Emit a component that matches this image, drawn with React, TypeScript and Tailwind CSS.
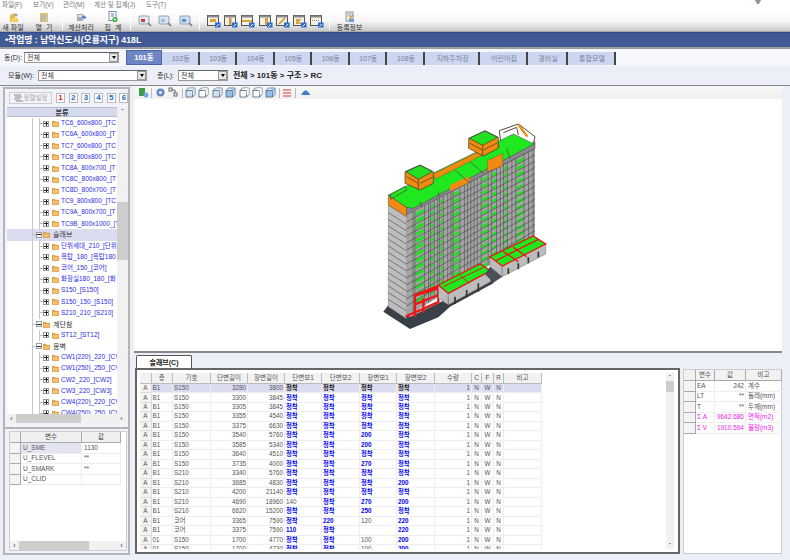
import React from "react";

const Sep = () => <div className="w-px h-[16px] bg-[#b5b5b5] border-r border-white shrink-0" />;

const Slot = ({ w, icon, label }: { w: string; icon: React.ReactNode; label?: string }) => (
  <div className={`${w} shrink-0 flex flex-col items-center`}>
    <div className="h-[11px] flex items-center justify-center">{icon}</div>
    {label && <div className="text-[7px] leading-[9px] text-[#333] whitespace-pre">{label}</div>}
  </div>
);

const FolderIcon = () => (
  <svg width="11" height="11" viewBox="0 0 11 11"><path d="M2 3 L7 1 V7 L2 10Z" fill="#e8b93c" /><path d="M4 6h6v4H2z" fill="#f2cf62" /><circle cx="8" cy="3" r="1.6" fill="#8aa9d8" /></svg>
);
const OpenIcon = () => (
  <svg width="11" height="11" viewBox="0 0 11 11"><rect x="2" y="1" width="7" height="9" fill="#e9c468" /><rect x="4" y="2" width="3" height="7" fill="#9fc0e0" /><path d="M2 1v9" stroke="#b98a2c" /></svg>
);
const CalcIcon = () => (
  <svg width="12" height="11" viewBox="0 0 12 11"><rect x="2" y="2" width="6" height="7" fill="#a9a9b0" /><rect x="3" y="3" width="4" height="2" fill="#dfe3ea" /><path d="M7 5h3M8.500 3.500 10.500 5.500 8.500 7" stroke="#3f84cc" strokeWidth="1.3" fill="none" /></svg>
);
const SumIcon = () => (
  <svg width="12" height="12" viewBox="0 0 12 12"><rect x="2" y="0.500" width="7" height="9" fill="#fff" stroke="#7c8fa8" /><path d="M4 3h3M4 5h3" stroke="#4a7cbd" /><circle cx="8" cy="8.500" r="2.600" fill="#3fae4a" /><path d="M6.800 8.500h2.400M8 7.300v2.400" stroke="#fff" strokeWidth=".7" /></svg>
);
const MagIcon = ({ fill, accent }: { fill: string; accent: string }) => (
  <svg width="15" height="13" viewBox="0 0 15 13">
    <rect x="1" y="1" width="10" height="8" rx="1" fill={fill} stroke="#8aa0b8" />
    <rect x="3" y="4" width="4" height="3" fill={accent} />
    <path d="M10 8l3 3" stroke="#777" strokeWidth="1.600" />
  </svg>
);
const LayoutIcon = ({ v }: { v: number }) => (
  <svg width="14" height="13" viewBox="0 0 14 13">
    <rect x="0.500" y="0.500" width="11" height="10" fill="#f3f1e6" stroke="#555" />
    <rect x="0.500" y="0.500" width="11" height="2" fill="#8b8b8b" />
    {v === 0 && <rect x="3" y="4" width="6" height="3" fill="#d9a43a" />}
    {v === 1 && <rect x="5" y="3" width="2.500" height="7" fill="#c69a3a" />}
    {v === 2 && <rect x="1" y="5" width="10" height="2" fill="#d9a43a" />}
    {v === 3 && <rect x="6" y="3" width="3" height="7" fill="#d9a43a" />}
    {v === 4 && <path d="M3 9 9 3" stroke="#c8952e" strokeWidth="1.600" />}
    {v === 5 && <path d="M3 4h6L6 6.500 9 9H3" fill="#d9a43a" />}
    {v === 6 && <path d="M2 5.500h8" stroke="#8b8b8b" strokeDasharray="1 1" />}
    <rect x="8" y="7.500" width="5.500" height="5" fill="#2f6ccf" />
    <path d="M9.500 11.500l2.500-2.500" stroke="#fff" />
  </svg>
);
const RegIcon = () => (
  <svg width="12" height="12" viewBox="0 0 12 12"><rect x="2" y="1" width="7" height="9" fill="#f4f1e2" stroke="#8c95a8" /><path d="M3.500 3h4M3.500 5h4" stroke="#99a" /><path d="M5 9 9 4" stroke="#d79a2d" strokeWidth="1.500" /><rect x="5" y="8" width="5" height="3" fill="#6ba0da" /></svg>
);
const Cube = ({ c }: { c: string }) => (
  <svg width="11" height="11" viewBox="0 0 11 11">
    <path d="M1 3.500h6.500v6.500H1z" fill={c} stroke="#4c5f7c" strokeWidth=".8" />
    <path d="M1 3.500 3.500 1H10L7.500 3.500M10 1v6.500L7.500 10" fill="none" stroke="#4c5f7c" strokeWidth=".8" />
    <path d="M3.500 1H10v6.500H7.500V3.500z" fill={c} opacity=".7" />
  </svg>
);

const Select = ({ w, v }: { w: string; v: string }) => (
  <div className={`${w} h-[11px] bg-white border border-[#999] border-t-[#666] flex items-center justify-between shrink-0`}>
    <span className="pl-[2px] text-[7px] leading-none text-[#333]">{v}</span>
    <div className="w-[9px] h-[9px] bg-[#e6e6e6] border border-[#999] flex items-center justify-center">
      <div className="w-0 h-0 border-l-[2.500px] border-r-[2.500px] border-t-[3px] border-l-transparent border-r-transparent border-t-black" />
    </div>
  </div>
);

const tabs: [string, string][] = [
  ["102동", "w-[37.500px]"], ["103동", "w-[37.500px]"], ["104동", "w-[37.500px]"], ["105동", "w-[37.500px]"],
  ["106동", "w-[37.500px]"], ["107동", "w-[37.500px]"], ["108동", "w-[38px]"], ["지하주차장", "w-[55px]"],
  ["어린이집", "w-[48px]"], ["경비실", "w-[40px]"], ["통합모델", "w-[48px]"],
];

const Fold = ({ x }: { x: string }) => (
  <svg width="7" height="7" viewBox="0 0 8 8" className={`${x} shrink-0`}>
    <path d="M0.500 1.500h2.500l1 1h3.500v5h-7z" fill="#f0a040" stroke="#c47a22" strokeWidth=".6" />
    <rect x="1.200" y="3.400" width="5.800" height="3.600" fill="#f9c06c" />
  </svg>
);
const Box = ({ open }: { open?: boolean }) => (
  <div className="relative w-[6px] h-[6px] border border-[#999] bg-white shrink-0 flex items-center justify-center">
    <div className="w-[4px] h-px bg-[#222]" />
    {!open && <div className="absolute w-px h-[4px] bg-[#222]" />}
  </div>
);

type Node = { t: string; g?: boolean; sel?: boolean };
const tree: Node[] = [
  ...["TC6_600x800_[TC", "TC6A_600x800_[T", "TC7_600x800_[TC", "TC8_800x800_[TC", "TC8A_800x700_[T", "TC8C_800x800_[T", "TC8D_800x700_[T", "TC9_800x800_[TC", "TC9A_800x700_[T", "TC9B_800x1000_[T"].map((t) => ({ t })),
  { t: "슬래브", g: true, sel: true },
  ...["단위세대_210_[단위", "옥탑_180_[옥탑180", "코어_150_[코어]", "화장실180_180_[화", "S150_[S150]", "S150_150_[S150]", "S210_210_[S210]"].map((t) => ({ t })),
  { t: "계단참", g: true },
  { t: "ST12_[ST12]" },
  { t: "옹벽", g: true },
  ...["CW1(220)_220_[CV", "CW1(250)_250_[CV", "CW2_220_[CW2]", "CW3_220_[CW3]", "CW4(220)_220_[CV", "CW4(250)_250_[CV"].map((t) => ({ t })),
];

const ScrollH = ({ cls, thumb }: { cls: string; thumb: string }) => (
  <div className={`${cls} h-[9px] bg-[#f1f1f1] flex items-center shrink-0`}>
    <span className="w-[9px] text-center text-[7px] leading-none text-[#333]">‹</span>
    <div className={`${thumb} h-[9px] bg-[#cdcdcd]`} />
    <div className="flex-1" />
    <span className="w-[9px] text-center text-[7px] leading-none text-[#333]">›</span>
  </div>
);

const J = "정착";
const rows: string[][] = [
  ["B1", "S150", "3280", "3800", J, J, J, J],
  ["B1", "S150", "3300", "3845", J, J, J, J],
  ["B1", "S150", "3305", "3845", J, J, J, J],
  ["B1", "S150", "3355", "4540", J, J, J, J],
  ["B1", "S150", "3375", "6630", J, J, J, J],
  ["B1", "S150", "3540", "5760", J, J, "200", J],
  ["B1", "S150", "3585", "5340", J, J, "200", J],
  ["B1", "S150", "3640", "4510", J, J, J, J],
  ["B1", "S150", "3735", "4000", J, J, "270", J],
  ["B1", "S210", "3340", "5760", J, J, J, J],
  ["B1", "S210", "3685", "4830", J, J, J, "200"],
  ["B1", "S210", "4200", "21140", J, J, J, J],
  ["B1", "S210", "4690", "18960", "140", J, "270", "200"],
  ["B1", "S210", "6620", "15200", J, J, "250", J],
  ["B1", "코어", "3365", "7590", J, "220", "120", "220"],
  ["B1", "코어", "3375", "7590", "110", J, "", "220"],
  ["01", "S150", "1700", "4770", J, J, "100", "200"],
  ["01", "S150", "1700", "4730", J, J, "100", "200"],
];
const thin = new Set(["140", "120", "100"]);
const heads = ["", "층", "기호", "단변길이", "장변길이", "단변보1", "단변보2", "장변보1", "장변보2", "수량", "C", "F", "R", "비고"];
const tableGrid = "grid grid-cols-[11.500px_21.500px_38px_37px_37px_37px_38px_37px_38px_37px_10px_12px_10px_38px]";

const Building = () => {
  const P = (u: number, v: number) => `${110 + 385 * u},${285 - 200 * u + v}`;
  const poly = (pts: string[]) => pts.join(" ");
  const floors = Array.from({ length: 14 }, (_, i) => i);
  const greens: [number, number][] = [[0.07, 0.135], [0.19, 0.21], [0.26, 0.28], [0.36, 0.41], [0.585, 0.63], [0.665, 0.695], [0.76, 0.78], [0.855, 0.91]];
  const columns = [0.05, 0.065, 0.14, 0.17, 0.185, 0.215, 0.24, 0.255, 0.285, 0.32, 0.345, 0.36, 0.415, 0.45, 0.475, 0.5, 0.525, 0.55, 0.58, 0.635, 0.66, 0.7, 0.73, 0.755, 0.785, 0.82, 0.85, 0.915, 0.95, 0.985];
  return (
    <svg width="200" height="210" viewBox="0 0 600 630" className="block">
      <polygon points="40,575 120,627 205,592 240,560 370,490 380,465 340,480 205,550 120,590 55,555" fill="#3a4048" />
      <polygon points="55,255 110,290 110,597 55,560" fill="#bdbdbd" stroke="#444" />
      {floors.map((i) => (
        <line key={i} x1="55" y1={278 + i * 20} x2="110" y2={313 + i * 20} stroke="#444" strokeWidth="1.800" />
      ))}
      <polygon points={poly([P(0, 0), P(1, 0), P(1, 265), P(0, 305)])} fill="#a4a4a4" />
      {floors.map((i) => (
        <g key={i}>
          {greens.map(([a, b], k) => (
            <polygon key={k} points={poly([P(a, 8 + i * 20), P(b, 8 + i * 20), P(b, 18 + i * 20), P(a, 18 + i * 20)])} fill="#22e022" />
          ))}
          <polygon points={`110,${283 + i * 21} 495,${84 + i * 19} 495,${87 + i * 19} 110,${286 + i * 21}`} fill="#5e5e5e" opacity=".85" />
        </g>
      ))}
      {columns.map((u) => (
        <line key={u} x1={110 + 385 * u} y1={285 - 200 * u} x2={110 + 385 * u} y2={590 - 240 * u} stroke="#4a4a4a" strokeWidth="1.800" />
      ))}
      {/* upper frame behind roof */}
      <path d="M388 32 445 12 495 50 490 72 M388 32 392 65 M400 38 440 22 445 45" fill="none" stroke="#5a4a3a" strokeWidth="3" />
      <path d="M445 14 472 50" stroke="#f08a10" strokeWidth="7" />
      {/* parapet and roof */}
      <polygon points="55,225 110,262 110,290 55,255" fill="#f08a10" stroke="#444" strokeWidth="1.500" />
      <polygon points="110,262 495,65 495,85 110,282" fill="#8a8a8a" stroke="#444" strokeWidth="1.500" />
      <polygon points="55,225 430,42 492,72 130,265 110,262" fill="#1fe81f" stroke="#3a3a3a" strokeWidth="1.500" />
      <polygon points="190,162 380,68 390,78 196,178" fill="#f08a10" stroke="#444" />
      <polygon points="240,195 298,168 298,187 240,214" fill="#f08a10" />
      <polygon points="352,122 398,100 398,138 352,155" fill="#f08a10" stroke="#444" />
      <path d="M60 225 62 238 110 210 106 198ZM205 215 208 232M150 245 155 262M255 150 300 190M300 125 340 160M410 85 420 115" fill="none" stroke="#444" strokeWidth="2" />
      {/* penthouses */}
      <polygon points="105,155 150,135 190,155 190,190 150,210 105,190" fill="#f08a10" stroke="#333" strokeWidth="2" />
      <polygon points="108,155 150,136 187,155 145,178" fill="#22e022" stroke="#333" strokeWidth="2" />
      <path d="M145 178V208M110 170 145 190M150 190 188 172" stroke="#333" strokeWidth="2" fill="none" />
      <polygon points="296,55 345,32 385,52 385,85 340,108 296,85" fill="#f08a10" stroke="#333" strokeWidth="2" />
      <polygon points="298,55 345,33 382,52 338,76" fill="#22e022" stroke="#333" strokeWidth="2" />
      <path d="M338 76V106M300 70 338 90M340 90 383 68" stroke="#333" strokeWidth="2" fill="none" />
      {/* lower left red frames */}
      <path d="M135 590V525L205 498V548M160 578V535M107 590 208 545M135 527 205 505M135 553 205 525" fill="none" stroke="#e81818" strokeWidth="7" />
      {/* podium 1 */}
      <polygon points="205,495 235,520 235,555 205,535" fill="#bcbcbc" stroke="#444" />
      <polygon points="235,520 362,452 362,485 235,555" fill="#bcbcbc" stroke="#444" />
      <polygon points="205,495 330,432 362,452 235,520" fill="#1fe81f" stroke="#e81818" strokeWidth="4" />
      <path d="M220 500 345 440M272 468 298 490" stroke="#e81818" strokeWidth="3" fill="none" />
      <path d="M255 530V552M290 510V532M325 490V515" stroke="#333" strokeWidth="5" />
      {/* podium 2 */}
      <polygon points="360,410 397,438 397,470 360,440" fill="#bcbcbc" stroke="#444" />
      <polygon points="397,438 527,372 527,402 397,470" fill="#bcbcbc" stroke="#444" />
      <polygon points="360,410 490,348 527,372 397,438" fill="#1fe81f" stroke="#e81818" strokeWidth="4" />
      <path d="M378 422 505 358M400 395 445 425M430 382 470 410" stroke="#e81818" strokeWidth="4" fill="none" />
      <path d="M415 445V462M445 430V448M475 412V430M505 395V412" stroke="#333" strokeWidth="5" />
      <polygon points="360,440 397,470 370,488 345,462" fill="#4a4f58" />
    </svg>
  );
};

export default function App() {
  return (
    <div className="w-[790px] h-[560px] overflow-hidden bg-[#eceef8] flex flex-col font-['Liberation_Sans','Noto_Sans_CJK_KR',sans-serif] text-[#444]">
      {/* menu */}
      <div className="h-[12px] bg-white flex items-center justify-between pl-[2px] pr-[29px] shrink-0">
        <div className="flex text-[6.500px] leading-none text-[#777] -mt-[1px]">
          <span className="w-[31px]">파일(F)</span>
          <span className="w-[30px]">보기(V)</span>
          <span className="w-[31px]">관리(M)</span>
          <span className="w-[52px]">계산 및 집계(J)</span>
          <span>도구(T)</span>
        </div>
        <svg width="6" height="5" viewBox="0 0 6 5" className="self-start"><path d="M0 0h6L4 4H2z" fill="#8c97a8" /></svg>
      </div>
      {/* toolbar */}
      <div className="h-[20px] shrink-0 bg-gradient-to-b from-white via-[#f5f5f5] to-[#c9c9c9] flex items-center border-b border-[#aaa]">
        <Slot w="w-[26px]" icon={<FolderIcon />} label="새 파일" />
        <Slot w="w-[36px]" icon={<OpenIcon />} label="열  기" />
        <Sep />
        <Slot w="w-[36px]" icon={<CalcIcon />} label="계산처리" />
        <Slot w="w-[28px]" icon={<SumIcon />} label="집  계" />
        <div className="w-[3px]" />
        <Sep />
        <div className="w-[5px]" />
        <div className="w-[19px] flex justify-center"><MagIcon fill="#e6e9ee" accent="#c9403c" /></div>
        <div className="w-[20px] flex justify-center"><MagIcon fill="#dbe6f2" accent="#9bb9d8" /></div>
        <div className="w-[22px] flex justify-center"><MagIcon fill="#cfe0f5" accent="#5f8fcf" /></div>
        <div className="w-[2px]" />
        <Sep />
        <div className="w-[5px]" />
        {[0, 1, 2, 3, 4, 5, 6].map((v) => (
          <div key={v} className="w-[17.300px] flex justify-center"><LayoutIcon v={v} /></div>
        ))}
        <div className="w-[3px]" />
        <Sep />
        <Slot w="w-[39px]" icon={<RegIcon />} label="등록정보" />
      </div>
      {/* blue title */}
      <div className="h-[17px] shrink-0 bg-[#415a96] border-t border-[#2f4a88] border-b-2 border-b-[#9a9a9a] flex items-center pl-[5px]">
        <span className="text-[8.800px] leading-none font-bold text-white">•작업명 : 남악신도시(오룡지구) 418L</span>
      </div>
      {/* dong tabs */}
      <div className="h-[17px] shrink-0 bg-[#f6f7fc] flex items-center">
        <span className="w-[24px] pl-[4px] text-[7px] leading-none text-[#333] whitespace-nowrap">동(D):</span>
        <Select w="w-[95px]" v="전체" />
        <div className="w-[7px]" />
        <div className="w-[36px] h-[15px] bg-[#6f86c6] border border-[#4a64a8] text-white font-bold text-[7.500px] leading-none flex items-center justify-center shrink-0">101동</div>
        {tabs.map(([t, w]) => (
          <div key={t} className={`${w} h-[13px] mt-[2px] bg-[#ccd6f0] border-r-2 border-r-[#444] pl-[2px] text-[7px] leading-none text-[#7a7f90] flex items-center justify-center shrink-0`}>{t}</div>
        ))}
      </div>
      {/* module row */}
      <div className="h-[20px] shrink-0 flex items-center border-b border-[#888]">
        <span className="w-[38px] pl-[8px] text-[7px] leading-none text-[#333] whitespace-nowrap">모듈(W):</span>
        <Select w="w-[109px]" v="전체" />
        <span className="ml-[10px] w-[21px] text-[7px] leading-none text-[#333] whitespace-nowrap">층(L):</span>
        <Select w="w-[50px]" v="전체" />
        <span className="ml-[5px] text-[8px] leading-none font-bold text-[#222]">전체 &gt; 101동 &gt; 구조 &gt; RC</span>
      </div>
      {/* body */}
      <div className="flex-1 flex min-h-0">
        {/* left panel */}
        <div className="w-[134px] shrink-0 pl-[3px] pr-[4px] pt-[1px] pb-[5px] flex flex-col">
          <div className="flex-1 flex flex-col min-h-0 border-2 border-[#b5b5b5] bg-[#f2f3fa]">
            <div className="h-[18px] shrink-0 flex items-center pl-[4px] overflow-hidden">
              <div className="w-[43px] h-[12px] border border-[#ccc] flex items-center justify-center gap-[1px] shrink-0">
                <svg width="9" height="8" viewBox="0 0 9 8"><path d="M0 1h7M1 3h7M0 5h6M2 7h7" stroke="#888" strokeWidth="1.200" /></svg>
                <span className="text-[6.500px] leading-none text-[#aaa]">정렬설정</span>
              </div>
              <div className="flex gap-[3.700px] ml-[4px] shrink-0">
                {["1", "2", "3", "4", "5", "6"].map((n, i) => (
                  <div key={n} className={`w-[9px] h-[10px] bg-white border border-[#bbb] text-[8px] leading-none font-bold flex items-center justify-center shrink-0 ${i === 0 ? "text-[#e01818]" : "text-[#1c6cc8]"}`}>{n}</div>
                ))}
              </div>
            </div>
            <div className="h-[307px] shrink-0 flex ml-[2px]">
              <div className="flex-1 min-w-0 flex flex-col">
                <div className="h-[10px] shrink-0 bg-[#d5d9ee] border-y border-[#b8bcd2] text-[7px] leading-none font-bold text-[#333] flex items-center justify-center">분류</div>
                <div className="flex-1 bg-white overflow-hidden pt-[1px]">
                  {tree.map((n) => (
                    <div key={n.t} className={`h-[11.150px] flex items-center whitespace-nowrap overflow-hidden ${n.sel ? "bg-[#dcdcf0]" : ""}`}>
                      <div className="w-[26px] self-stretch border-r border-[#c8c8c8] shrink-0" />
                      {!n.g && <div className="w-[7px] self-stretch border-r border-[#c8c8c8] shrink-0" />}
                      <div className="h-px bg-[#bbb] shrink-0 w-[3px]" />
                      <Box open={n.g} />
                      <Fold x={n.g ? "ml-[1px]" : "ml-[3px]"} />
                      {n.g ? (
                        <span className="ml-[3px] text-[7px] leading-none text-[#333]">{n.t}</span>
                      ) : (
                        <span className="ml-[2px] text-[6.500px] leading-none text-[#2c2ce6]">{n.t}</span>
                      )}
                    </div>
                  ))}
                </div>
              </div>
              <div className="w-[11px] shrink-0 bg-[#f1f1f1] flex flex-col items-center">
                <span className="h-[9px] text-[7px] leading-[9px] text-[#333]">ˆ</span>
                <div className="h-[86px] shrink-0" />
                <div className="w-full h-[58px] bg-[#cdcdcd] shrink-0" />
                <div className="flex-1" />
              </div>
            </div>
            <ScrollH cls="ml-[2px] mr-[2px]" thumb="w-[65px]" />
            <div className="h-[6px] shrink-0 border-b-2 border-[#b5b5b5]" />
            <div className="flex-1 min-h-0 m-[2px] ml-[4px] mr-[1px] bg-white border border-[#ccc] flex flex-col overflow-hidden">
              <div className="grid grid-cols-[11px_61px_39px] h-[11px] shrink-0 text-[6.500px] leading-none text-[#444]">
                {["", "변수", "값"].map((h, i) => (
                  <div key={i} className="bg-[#f0f0f0] border-r border-b border-[#aaa] flex items-center justify-center">{h}</div>
                ))}
              </div>
              {[["U_SME", "1130"], ["U_FLEVEL", "**"], ["U_SMARK", "**"], ["U_CLID", ""]].map(([a, b], i) => (
                <div key={a} className="grid grid-cols-[11px_61px_39px] h-[10.500px] shrink-0 text-[6.500px] leading-none text-[#555]">
                  <div className="bg-[#f4f4f4] border-r border-b border-[#aaa]" />
                  <div className={`pl-[2px] flex items-center border-r border-b border-[#eee] ${i === 0 ? "bg-[#e4e4f0]" : ""}`}>{a}</div>
                  <div className="pl-[2px] flex items-center border-r border-b border-[#eee]">{b}</div>
                </div>
              ))}
              <div className="flex-1" />
              <ScrollH cls="" thumb="w-[70px]" />
            </div>
          </div>
        </div>
        {/* right */}
        <div className="flex-1 min-w-0 flex flex-col pr-[8px]">
          <div className="h-[267px] shrink-0 bg-white border-b-2 border-[#888] flex flex-col overflow-hidden">
            <div className="h-[13px] shrink-0 bg-gradient-to-b from-[#f8f8f8] to-[#f0f0f0] flex items-center gap-[2.400px] pl-[4px]">
              <svg width="11" height="11" viewBox="0 0 11 11"><rect x="1" y="1" width="6" height="8" fill="#3f9a4a" /><circle cx="8" cy="8" r="2.500" fill="#74a7e0" /></svg>
              <div className="w-px h-[10px] bg-[#bbb]" />
              <svg width="11" height="11" viewBox="0 0 11 11"><circle cx="5.500" cy="5.500" r="4" fill="#6088c0" /><circle cx="5.500" cy="5.500" r="1.700" fill="#dde" /></svg>
              <svg width="11" height="11" viewBox="0 0 11 11"><rect x="1" y="1" width="3" height="3" fill="none" stroke="#667" /><rect x="6" y="6" width="3" height="3" fill="none" stroke="#667" /><path d="M4 3h3v3" fill="none" stroke="#667" /></svg>
              <div className="w-px h-[10px] bg-[#bbb]" />
              {["#cfe3f5", "#ffffff", "#cfe3f5", "#8fc0ea", "#ffffff", "#ffffff", "#8fc0ea"].map((c, i) => (
                <Cube key={i} c={c} />
              ))}
              <div className="w-px h-[10px] bg-[#bbb]" />
              <svg width="10" height="10" viewBox="0 0 10 10"><path d="M1 2h8M1 5h8M1 8h8" stroke="#d83a3a" /></svg>
              <div className="w-px h-[10px] bg-[#bbb] mx-[1px]" />
              <svg width="11" height="9" viewBox="0 0 11 9"><path d="M1 7 3 4 6 2l4 4v1z" fill="#3f7fc8" /></svg>
            </div>
            <div className="pl-[236px] pt-[21px]"><Building /></div>
          </div>
          <div className="h-[2px] shrink-0" />
          <div className="flex flex-1 min-h-0 pb-[6px]">
            <div className="w-[546px] shrink-0 flex flex-col">
              <div className="h-[13px] shrink-0 flex items-end">
                <div className="ml-[2px] w-[56px] h-[13px] bg-white border border-b-0 border-[#555] rounded-t-[2px] text-[7px] leading-none font-bold text-[#222] flex items-center justify-center">슬래브(C)</div>
              </div>
              <div className="flex-1 min-h-0 ml-[1px] bg-white border-2 border-[#666] flex p-[3px]">
                <div className="w-[402px] shrink-0 overflow-hidden">
                  <div className={`${tableGrid} h-[11px] text-[6.500px] leading-none text-[#555]`}>
                    {heads.map((h, i) => (
                      <div key={i} className="bg-[#f2f2f2] border-r border-b border-[#bbb] flex items-center justify-center">{h}</div>
                    ))}
                  </div>
                  {rows.map((r, i) => (
                    <div key={i} className={`${tableGrid} h-[9.470px] text-[6.300px] leading-none text-[#555]`}>
                      <div className="bg-[#f4f4f4] border-r border-b border-[#ddd] flex items-center justify-center">A</div>
                      {[...r, "1", "N", "W", "N", ""].map((c, k) => {
                        const bold = k >= 4 && k <= 7 && c !== "" && !thin.has(c);
                        const right = k === 2 || k === 3 || k === 8;
                        return (
                          <div
                            key={k}
                            className={`flex items-center border-r border-b border-[#eeeef2] overflow-hidden whitespace-nowrap px-[1px] ${right ? "justify-end" : k >= 9 ? "justify-center" : "justify-start"} ${i === 0 ? "bg-[#dcdcf0]" : ""} ${bold ? (i === 0 ? "font-bold text-[#111]" : "font-bold text-[#0000f0]") : ""}`}
                          >
                            {c}
                          </div>
                        );
                      })}
                    </div>
                  ))}
                </div>
                <div className="flex-1" />
                <div className="w-[8px] shrink-0 bg-[#f1f1f1] flex flex-col items-center mr-[1px]">
                  <span className="h-[8px] text-[6px] leading-[8px] text-[#333]">ˆ</span>
                  <div className="w-full h-[11px] bg-[#cdcdcd] shrink-0" />
                  <div className="flex-1" />
                  <span className="h-[8px] text-[6px] leading-[8px] text-[#333]">ˇ</span>
                </div>
              </div>
            </div>
            <div className="w-[99px] shrink-0 ml-[3px] mt-[14px] bg-white border border-[#ccc] flex flex-col text-[6.500px] leading-none text-[#555]">
              <div className="grid grid-cols-[12px_19px_31px_36px] h-[11px] shrink-0">
                {["", "변수", "값", "비고"].map((h, i) => (
                  <div key={i} className="bg-[#f2f2f2] border-r border-b border-[#aaa] flex items-center justify-center">{h}</div>
                ))}
              </div>
              {[
                ["EA", "242", "계수", false],
                ["LT", "**", "둘레(mm)", false],
                ["T", "**", "두께(mm)", false],
                ["Σ A", "9642.686", "면적(m2)", true],
                ["Σ V", "1910.594", "물량(m3)", true],
              ].map(([a, b, c, m]) => (
                <div key={a as string} className={`grid grid-cols-[12px_19px_31px_36px] h-[10.500px] shrink-0 ${m ? "text-[#f020f0]" : ""}`}>
                  <div className="bg-[#f4f4f4] border-r border-b border-[#aaa]" />
                  <div className="pl-[1px] flex items-center border-r border-b border-[#eee]">{a}</div>
                  <div className="pr-[1px] flex items-center justify-end border-r border-b border-[#eee] whitespace-nowrap">{b}</div>
                  <div className="pl-[2px] flex items-center border-b border-[#eee] whitespace-nowrap">{c}</div>
                </div>
              ))}
            </div>
          </div>
        </div>
      </div>
    </div>
  );
}
